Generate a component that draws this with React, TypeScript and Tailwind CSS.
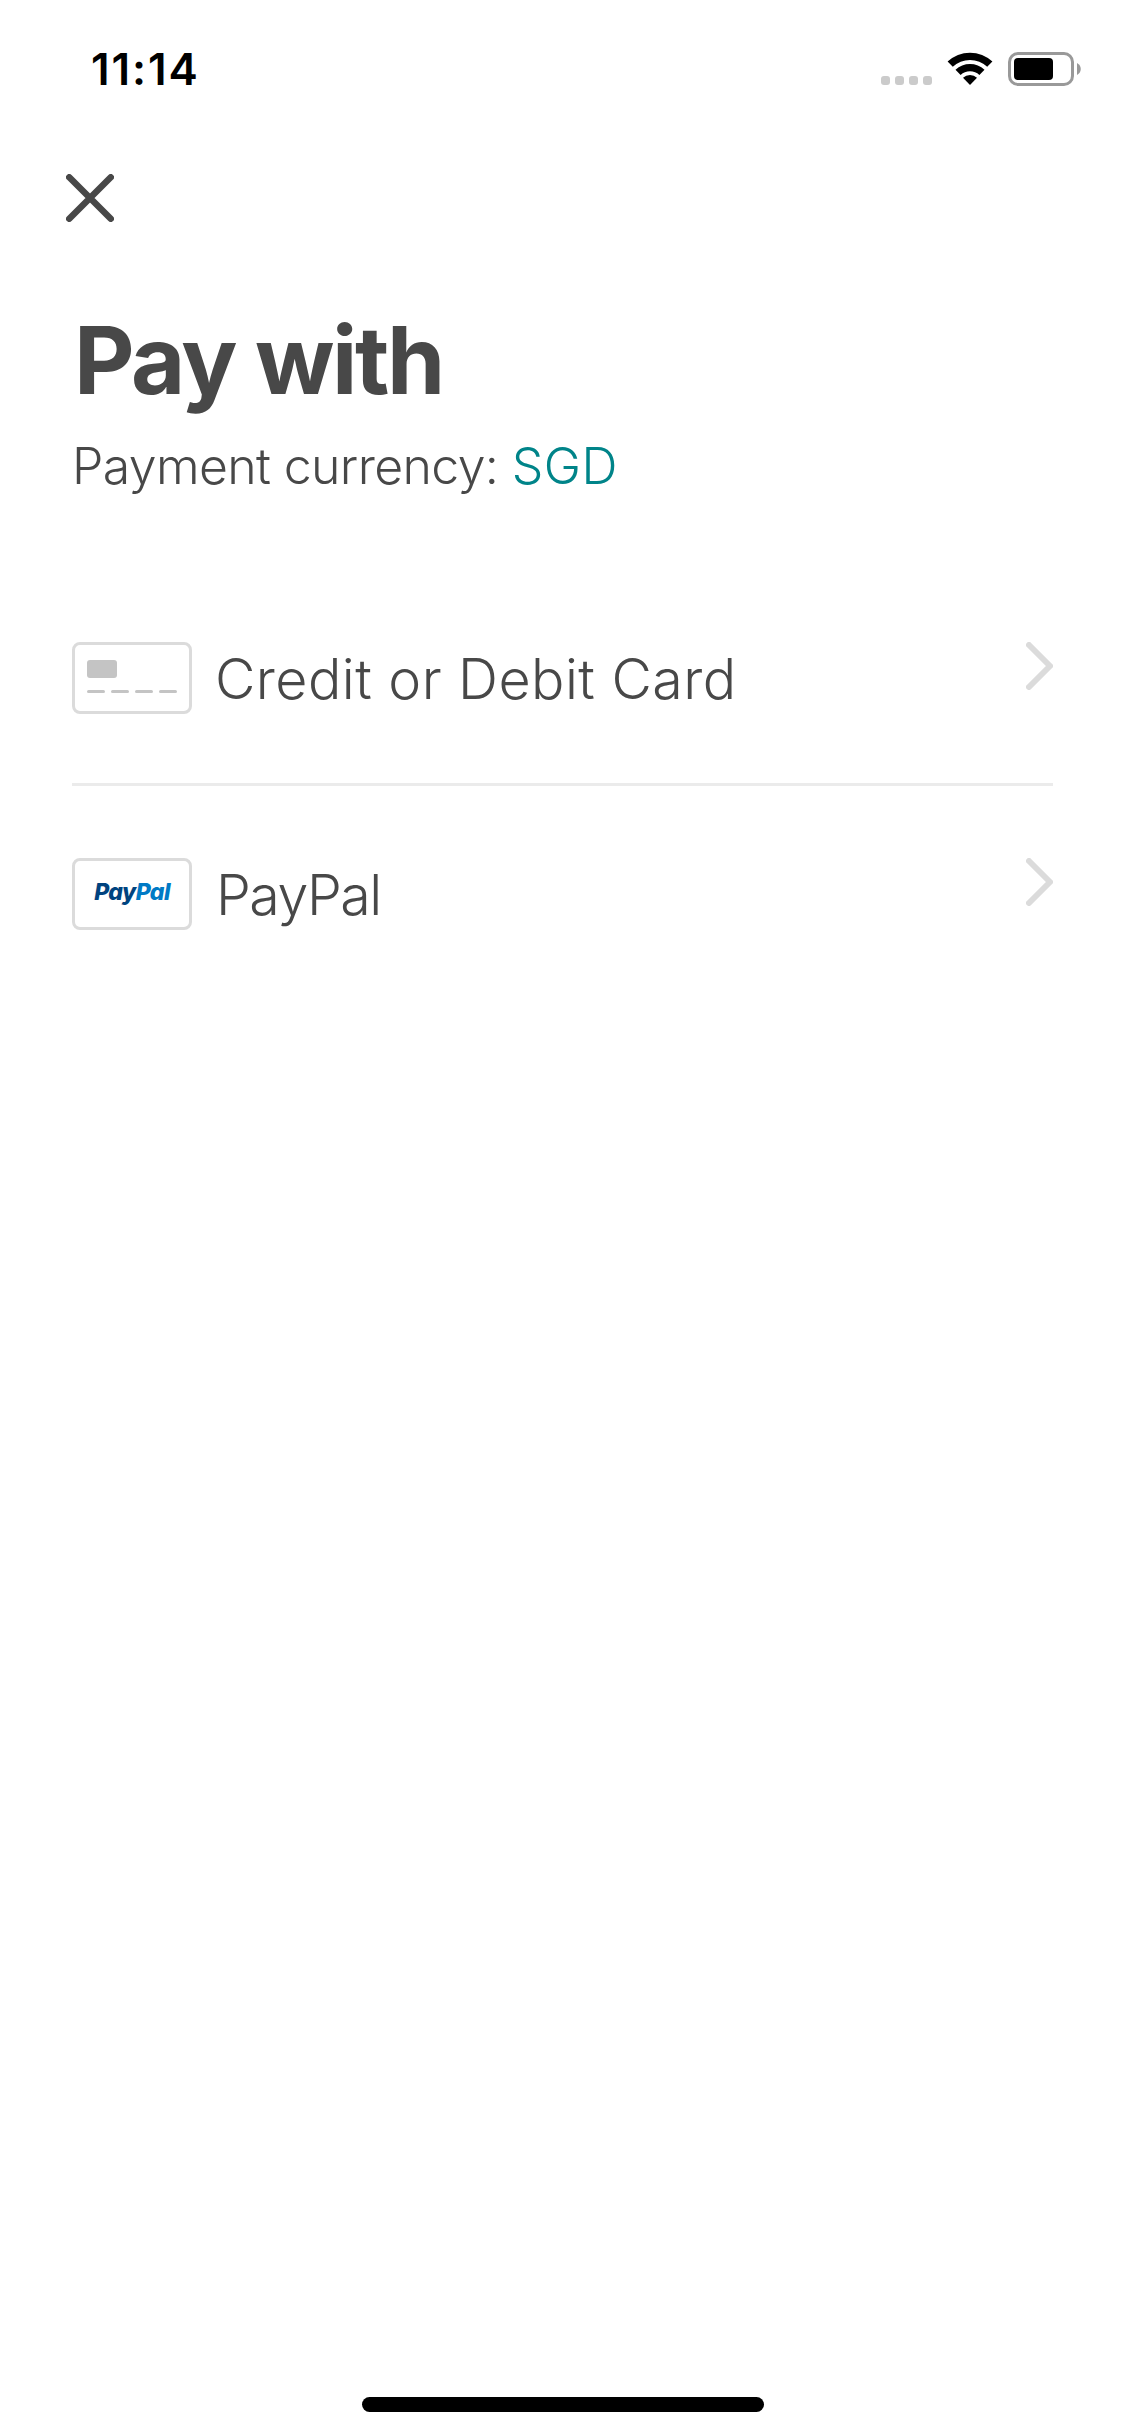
function WifiIcon() {
  return (
    <svg className="ml-[15px] h-[34px] w-[46px]" viewBox="0 0 46 34">
      <path d="M0.6 9.6 A32.5 32.5 0 0 1 45.4 9.6 L40.2 14.8 A25 25 0 0 0 5.8 14.8 Z" />
      <path d="M8.5 17.8 A21.2 21.2 0 0 1 37.5 17.8 L32.4 22.9 A14 14 0 0 0 13.6 22.9 Z" />
      <path d="M16 25.8 A10.3 10.3 0 0 1 30 25.8 L23 33 Z" />
    </svg>
  );
}

function BatteryIcon() {
  return (
    <svg className="ml-[15px] h-[34px] w-[73px]" viewBox="0 0 73 34">
      <rect x="1.5" y="1.5" width="63" height="31" rx="8.5" fill="none" stroke="#999" strokeWidth="3" />
      <rect x="6" y="6" width="39" height="22" rx="4" />
      <path d="M69 11 C74 13.5 74 20.5 69 23 Z" fill="#999" />
    </svg>
  );
}

function StatusBar() {
  return (
    <header className="flex h-[138px] items-center justify-between pl-[91px] pr-[44px]">
      <div className="w-[110px] whitespace-nowrap text-[44px] font-semibold leading-none tracking-[1.9px] text-black">11:14</div>
      <div className="flex items-end">
        <div className="mb-px flex gap-[5px]">
          {[0, 1, 2, 3].map((i) => (
            <span key={i} className="size-[9px] rounded-[3px] bg-[#cbcbcb]" />
          ))}
        </div>
        <WifiIcon />
        <BatteryIcon />
      </div>
    </header>
  );
}

function Chevron() {
  return (
    <svg className="ml-auto h-12 w-[27px]" viewBox="0 0 27 48" fill="none" stroke="#dbdbdb" strokeWidth="6" strokeLinecap="round" strokeLinejoin="round">
      <path d="M3 3 L24 24 L3 45" />
    </svg>
  );
}

function CardIcon() {
  return (
    <div className="h-[72px] w-[120px] shrink-0 rounded-[8px] border-3 border-[#dbdbdb] px-3 pt-[15px]">
      <div className="h-[18px] w-[30px] rounded-[3px] bg-[#c4c4c4]" />
      <div className="mt-3 flex gap-1.5">
        {[0, 1, 2, 3].map((i) => (
          <span key={i} className="h-[3px] w-[18px] rounded-full bg-[#c4c4c4]" />
        ))}
      </div>
    </div>
  );
}

function PayPalIcon() {
  return (
    <div className="flex h-[72px] w-[120px] shrink-0 items-center justify-center rounded-[8px] border-3 border-[#dbdbdb] pb-1 text-[23px] font-extrabold italic leading-none tracking-[-0.6px]">
      <span className="text-[#00437f]">Pay</span>
      <span className="text-[#007ac5]">Pal</span>
    </div>
  );
}

export default function App() {
  return (
    <div className="flex h-[2436px] w-[1125px] flex-col bg-white font-['Inter',sans-serif] text-[#484848]">
      <StatusBar />
      <button className="ml-[66px] mt-9 size-12" aria-label="Close">
        <svg viewBox="0 0 48 48" fill="none" stroke="currentColor" strokeWidth="6.5" strokeLinecap="round">
          <path d="M3.25 3.25 L44.75 44.75 M44.75 3.25 L3.25 44.75" />
        </svg>
      </button>
      <main className="flex flex-col px-[72px] pt-[90px]">
        <h1 className="ml-0.5 whitespace-nowrap text-[93.5px] font-bold leading-[96px] tracking-[-2.4px]">Pay with</h1>
        <p className="mt-7 whitespace-nowrap text-[50px] font-light leading-[60px] tracking-[-0.64px]">
          Payment currency: <span className="tracking-[0.5px] text-[#008489]">SGD</span>
        </p>
        <ul className="mt-[146px]">
          <li className="flex h-[144px] items-start border-b-3 border-[#ebebeb]">
            <CardIcon />
            <span className="ml-[23px] whitespace-nowrap text-[55.5px] font-light leading-[74px] tracking-[0.45px]">Credit or Debit Card</span>
            <Chevron />
          </li>
          <li className="flex h-[144px] items-start pt-[72px]">
            <PayPalIcon />
            <span className="ml-6 whitespace-nowrap text-[55.5px] font-light leading-[74px] tracking-[-1.5px]">PayPal</span>
            <Chevron />
          </li>
        </ul>
      </main>
      <div className="mb-6 ml-[362px] mt-auto h-[15px] w-[402px] rounded-full bg-black" />
    </div>
  );
}
